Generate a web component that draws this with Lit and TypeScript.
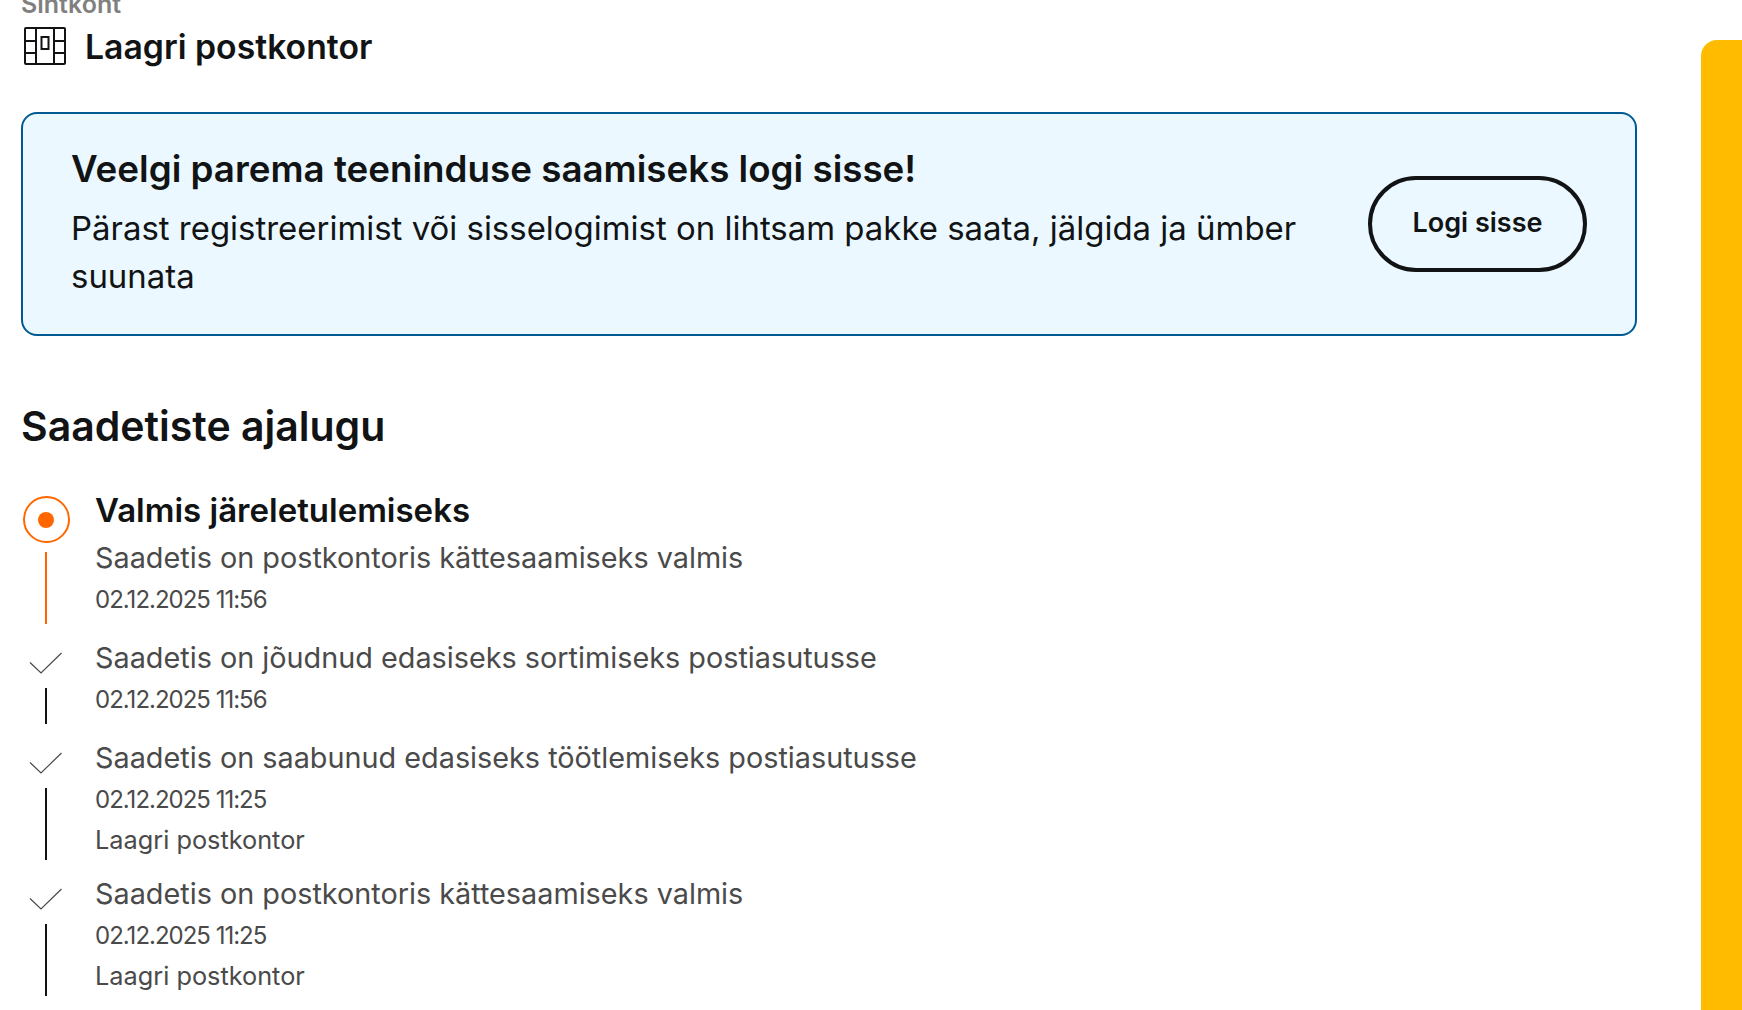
import { LitElement, html, css } from "lit";
import { customElement } from "lit/decorators.js";

type Ev = { desc: string; date: string; loc?: string };
const events: Ev[] = [
  { desc: "Saadetis on jõudnud edasiseks sortimiseks postiasutusse", date: "02.12.2025 11:56" },
  { desc: "Saadetis on saabunud edasiseks töötlemiseks postiasutusse", date: "02.12.2025 11:25", loc: "Laagri postkontor" },
  { desc: "Saadetis on postkontoris kättesaamiseks valmis", date: "02.12.2025 11:25", loc: "Laagri postkontor" },
];

@customElement("app-root")
export class AppRoot extends LitElement {
  static styles = css`
    :host { display: block; height: 1010px; overflow: hidden; background: #fff; font-family: "Inter", "Open Sans", sans-serif; color: #111314; }
    .page { display: flex; height: 1010px; }
    main { width: 1616px; margin-left: 21px; flex: none; }
    aside { width: 41px; margin-left: 64px; margin-top: 40px; background: #ffbb00; border-top-left-radius: 16px; flex: none; }
    .label { margin-top: -16px; height: 40px; line-height: 40px; font-size: 25px; font-weight: 600; color: #808080; }
    .office { display: flex; align-items: center; height: 40px; margin-top: 2px; font-size: 33.75px; font-weight: 600; }
    .office svg { margin-left: 3px; margin-right: 19px; flex: none; }
    .banner { box-sizing: border-box; height: 224px; margin-top: 46px; padding: 0 48px; border: 2px solid #005a92; border-radius: 16px; background: #ebf8ff; display: flex; align-items: center; gap: 64px; }
    .banner-text { flex: 1; padding-bottom: 3px; }
    .banner h2 { margin: 0; font-size: 36.75px; line-height: 48px; font-weight: 600; }
    .banner p { margin: 11px 0 0; font-size: 32.95px; line-height: 48px; font-weight: 400; }
    .btn { box-sizing: border-box; width: 219px; height: 96px; padding: 0 0 3px; flex: none; border: 4px solid #111314; border-radius: 48px; background: transparent; color: inherit; font: 600 27px "Inter", sans-serif; }
    h1 { margin: 62px 0 0; height: 56px; line-height: 56px; font-size: 41px; font-weight: 600; }
    .timeline { margin-top: 36px; }
    .row { display: flex; gap: 24px; }
    .rail { width: 50px; flex: none; display: flex; flex-direction: column; align-items: center; }
    .circle { box-sizing: border-box; width: 47px; height: 47px; margin-top: 6px; margin-bottom: 9px; border: 2px solid #ff6600; border-radius: 50%; display: flex; align-items: center; justify-content: center; }
    .dot { width: 16px; height: 16px; border-radius: 50%; background: #ff6600; }
    .check { display: block; margin-top: 14px; margin-bottom: 14px; }
    .line { width: 2px; flex: 1; margin-bottom: 14px; background: #111314; }
    .line.active { background: #ff6600; }
    .title { height: 48px; line-height: 40px; font-size: 33px; font-weight: 600; }
    .desc { height: 40px; line-height: 40px; font-size: 28.8px; color: #4a4a4a; }
    .meta { height: 36px; line-height: 36px; font-size: 24px; letter-spacing: -1px; color: #4a4a4a; }
    .meta.first { margin-top: 4px; }
    .meta.loc { line-height: 44px; letter-spacing: 0; font-size: 25.3px; }
    .body { padding-bottom: 20px; }
  `;

  render() {
    const check = html`<svg class="check" width="34" height="22" viewBox="0 0 34 22"><path d="M1 10.5 L12 21 L32.5 1" fill="none" stroke="#4a4a4a" stroke-width="1.2"/></svg>`;
    return html`<div class="page">
      <main>
        <div class="label">Sihtkont</div>
        <div class="office">
          <svg width="42" height="38" viewBox="0 0 42 38" fill="none" stroke="#111314" stroke-width="2">
            <rect x="1" y="1" width="40" height="36" rx="1"/>
            <path d="M12 1V37M30 1V37M1 14H12M1 26H12M30 14H41M30 26H41"/>
            <rect x="17.5" y="10" width="7" height="12"/>
          </svg>
          Laagri postkontor
        </div>
        <section class="banner">
          <div class="banner-text">
            <h2>Veelgi parema teeninduse saamiseks logi sisse!</h2>
            <p>Pärast registreerimist või sisselogimist on lihtsam pakke saata, jälgida ja ümber suunata</p>
          </div>
          <button class="btn">Logi sisse</button>
        </section>
        <h1>Saadetiste ajalugu</h1>
        <div class="timeline">
          <div class="row">
            <div class="rail"><div class="circle"><div class="dot"></div></div><div class="line active"></div></div>
            <div class="body">
              <div class="title">Valmis järeletulemiseks</div>
              <div class="desc">Saadetis on postkontoris kättesaamiseks valmis</div>
              <div class="meta first">02.12.2025 11:56</div>
            </div>
          </div>
          ${events.map(e => html`<div class="row">
            <div class="rail">${check}<div class="line"></div></div>
            <div class="body">
              <div class="desc">${e.desc}</div>
              <div class="meta first">${e.date}</div>
              ${e.loc ? html`<div class="meta loc">${e.loc}</div>` : ""}
            </div>
          </div>`)}
        </div>
      </main>
      <aside></aside>
    </div>`;
  }
}
